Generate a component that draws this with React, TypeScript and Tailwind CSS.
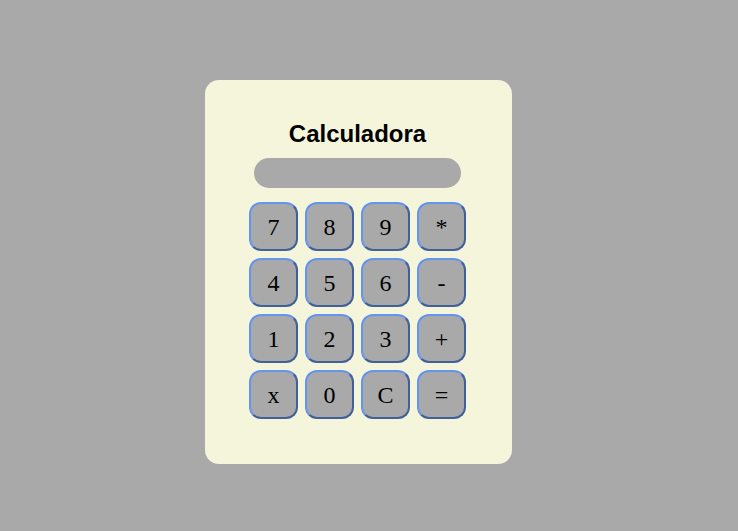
const keys = ["7", "8", "9", "*", "4", "5", "6", "-", "1", "2", "3", "+", "x", "0", "C", "="];

export default function App() {
  return (
    <div className="min-h-[531px] w-full bg-[#a9a9a9] pt-[80px] pl-[205px]">
      <div className="flex h-[384px] w-[307px] flex-col items-center rounded-[14px] bg-[#f5f5dc] pt-[40px] pr-[2px]">
        <h1 className="font-['Liberation_Sans',Arial,sans-serif] text-[24px] font-bold leading-[28px] text-black">
          Calculadora
        </h1>
        <div className="mt-[10px] h-[30px] w-[207px] rounded-full bg-[#a9a9a9]" />
        <div className="mt-[14px] grid grid-cols-[repeat(4,49px)] gap-[7px]">
          {keys.map((k) => (
            <button
              key={k}
              className="flex h-[49px] w-[49px] items-center justify-center rounded-[12px] border-2 border-[#6495ed] bg-[#a9a9a9] font-['Liberation_Serif','Times_New_Roman',serif] text-[24px] text-black [border-style:outset]"
            >
              {k}
            </button>
          ))}
        </div>
      </div>
    </div>
  );
}
